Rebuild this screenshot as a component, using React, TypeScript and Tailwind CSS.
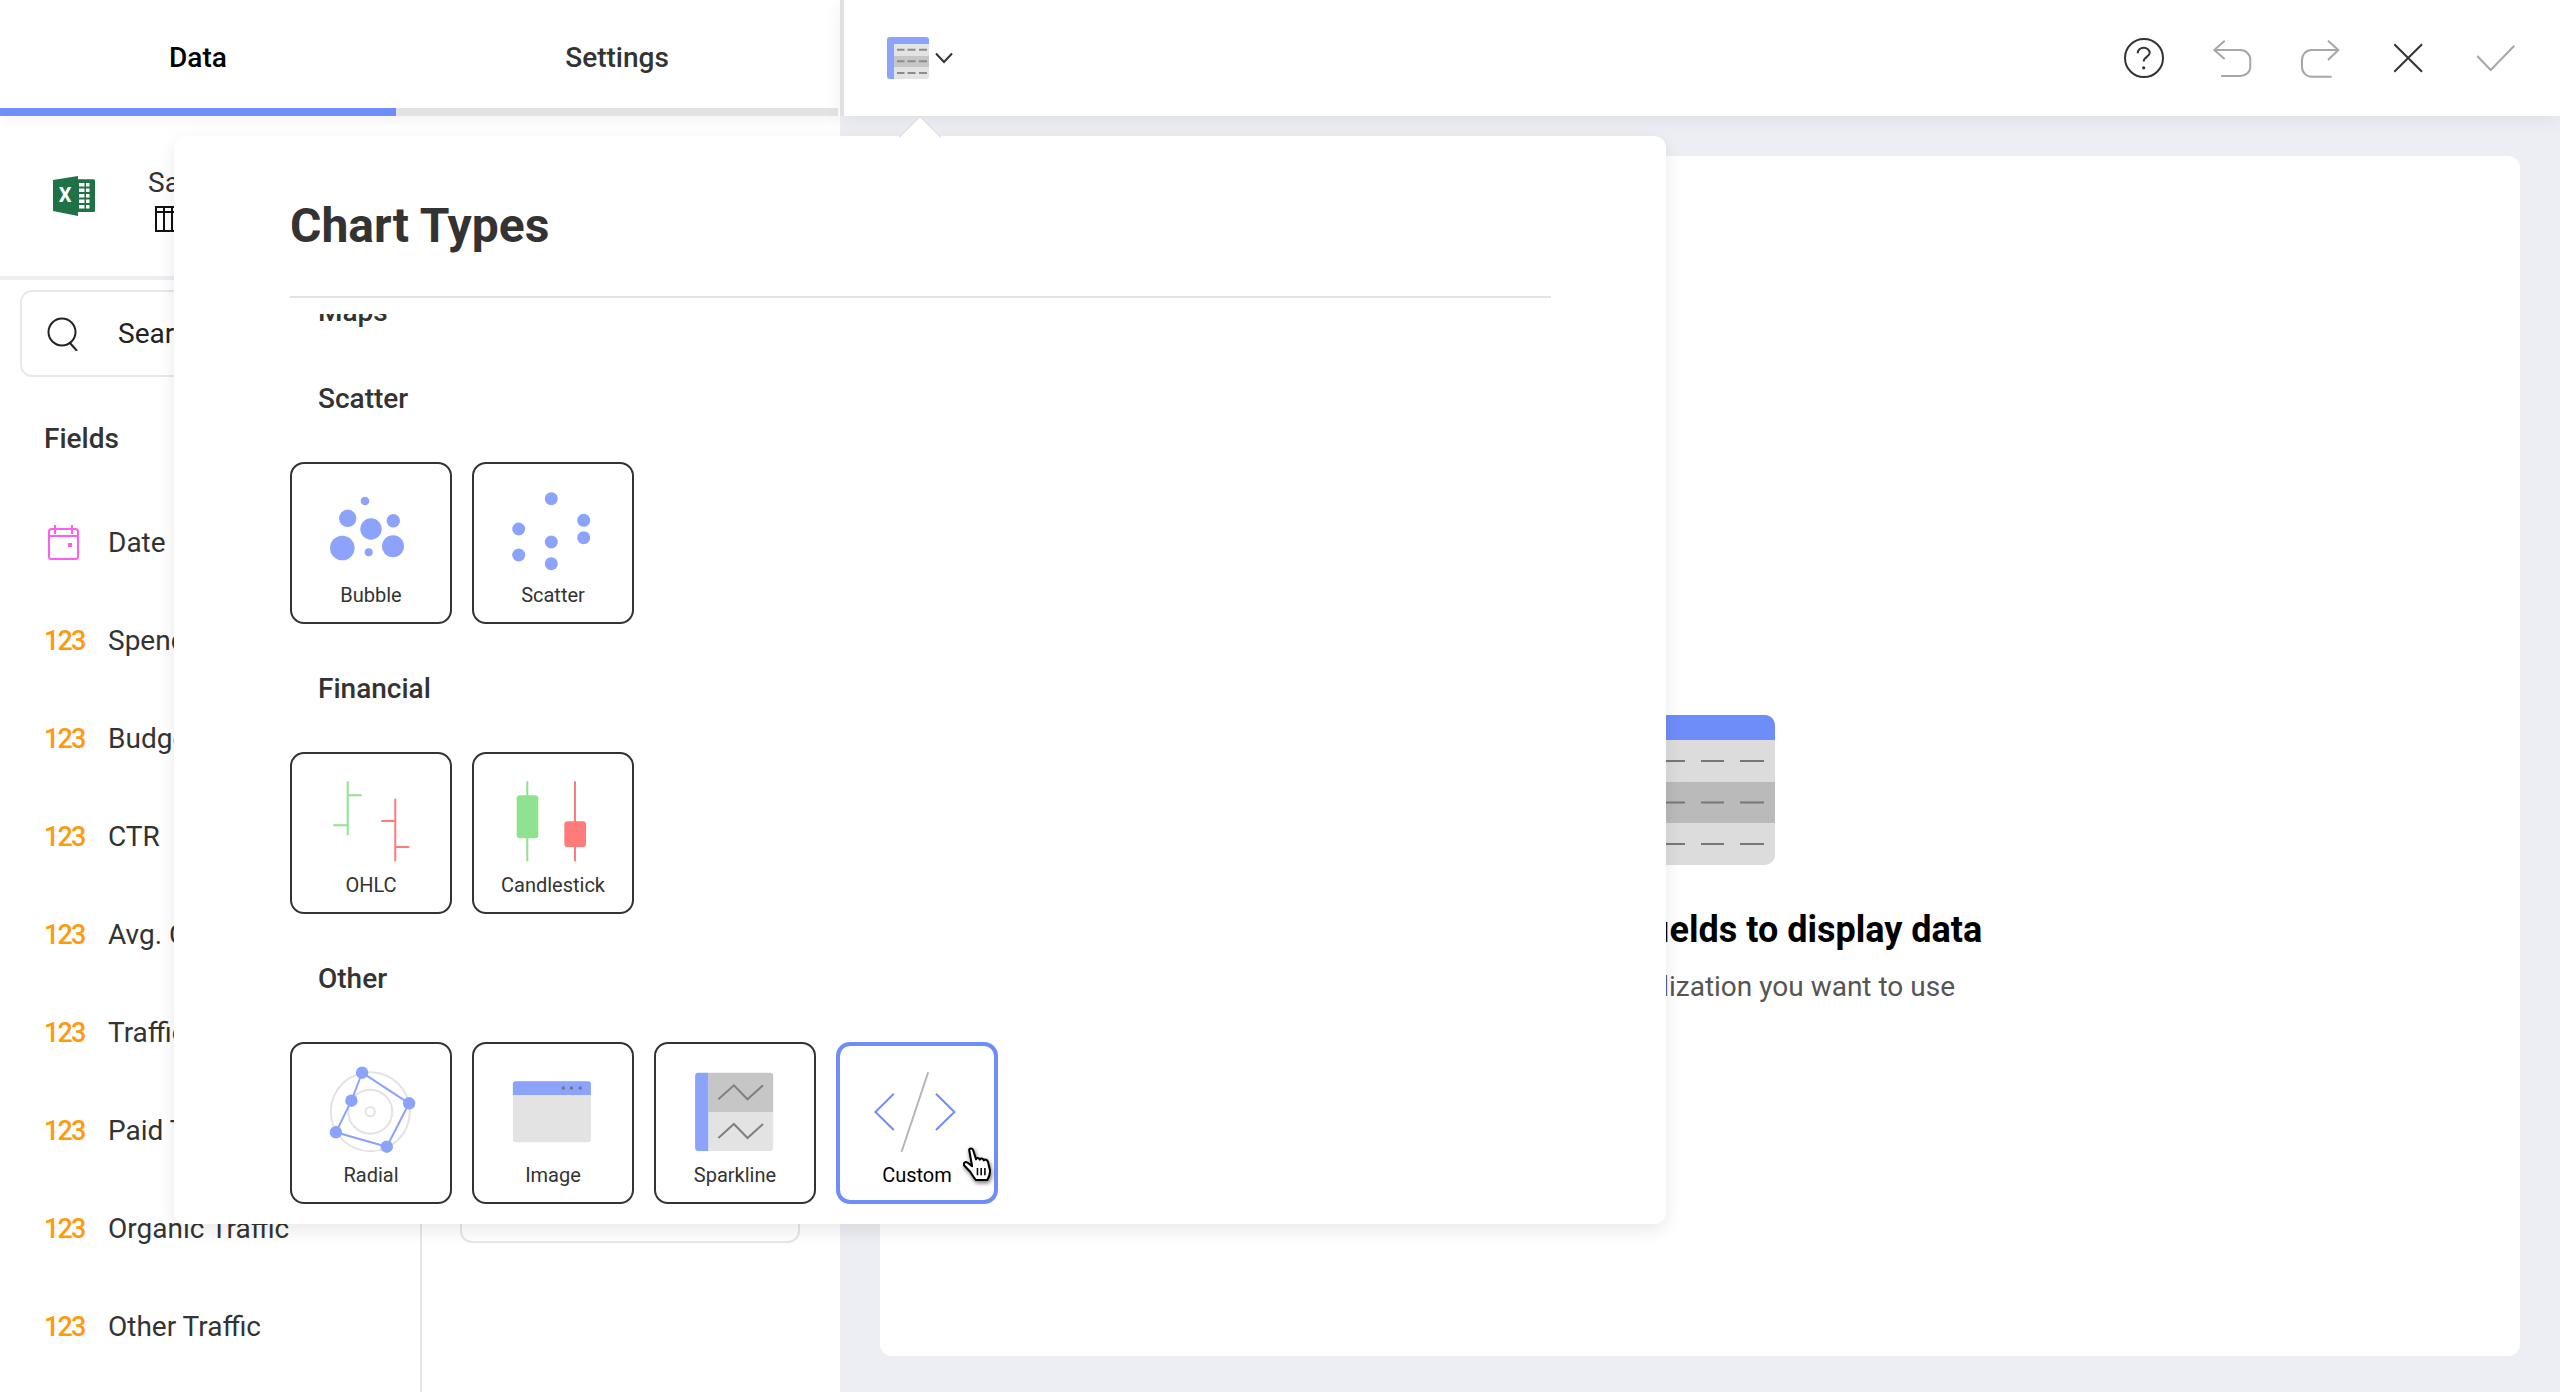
import type { ReactNode } from 'react';

const BLUE = '#8ca3fb';
const GRID = '#e3e3e3';

function BubbleIcon() {
  const dots = [
    [73, 37, 4.3], [55.7, 54.3, 8.7], [79, 65, 10.7], [101.3, 56.7, 6.7],
    [50.3, 84, 12.3], [101, 82.3, 11], [76.7, 88.3, 4],
  ];
  return <>{dots.map(([cx, cy, r]) => <circle key={`${cx}-${cy}`} cx={cx} cy={cy} r={r} fill={BLUE} />)}</>;
}

function ScatterIcon() {
  const dots = [
    [77.3, 34.7], [44.7, 65], [109.7, 56.3], [109.7, 73.7], [77.3, 78], [44.7, 91], [77.3, 99.7],
  ];
  return <>{dots.map(([cx, cy]) => <circle key={`${cx}-${cy}`} cx={cx} cy={cy} r={6.5} fill={BLUE} />)}</>;
}

function OhlcIcon() {
  return (
    <g fill="none" strokeWidth={2}>
      <path d="M55.7 27.3V81.3M55.7 41.3H69.7M41.3 71.3H55.7" stroke="#8fe28f" />
      <path d="M103.3 44.7V107.3M89.3 67H103.3M103.3 93H117.3" stroke="#ff7b7b" />
    </g>
  );
}

function CandlestickIcon() {
  return (
    <>
      <path d="M53.3 27.3V107.3" stroke="#8fe28f" strokeWidth={2} />
      <rect x={42.7} y={41.3} width={21.6} height={43} rx={3} fill="#8fe28f" />
      <path d="M101 27.3V107.3" stroke="#ff7b7b" strokeWidth={2} />
      <rect x={90.3} y={67.3} width={21.7} height={25.7} rx={3} fill="#ff7b7b" />
    </>
  );
}

function RadialIcon() {
  const pts = [[70.1, 28.7], [117.1, 59.3], [94.8, 102.7], [43.9, 88.3], [59.4, 56.7]];
  return (
    <>
      <g fill="none" stroke={GRID} strokeWidth={2}>
        <circle cx={78.3} cy={67.7} r={39.5} />
        <circle cx={78.3} cy={67.7} r={22} />
        <circle cx={78.3} cy={67.7} r={4.6} />
      </g>
      <polygon points={pts.map((p) => p.join(',')).join(' ')} fill="none" stroke={BLUE} strokeWidth={2} />
      {pts.map(([cx, cy]) => <circle key={cx} cx={cx} cy={cy} r={6.2} fill={BLUE} />)}
    </>
  );
}

function ImageIcon() {
  return (
    <>
      <rect x={38.9} y={37.3} width={78} height={61} rx={3} fill={GRID} />
      <path d="M38.9 51V40.3a3 3 0 0 1 3-3h72a3 3 0 0 1 3 3V51z" fill={BLUE} />
      <circle cx={89.3} cy={44} r={1.7} fill="#777" />
      <circle cx={97.5} cy={44} r={1.7} fill="#777" />
      <circle cx={106.2} cy={44} r={1.7} fill="#777" />
    </>
  );
}

function SparklineIcon() {
  return (
    <>
      <path d="M52.2 28.7H114.2a3 3 0 0 1 3 3V68H52.2z" fill="#c6c6c6" />
      <path d="M52.2 68H117.2V104a3 3 0 0 1-3 3H52.2z" fill={GRID} />
      <path d="M52.2 28.7H42.1a3 3 0 0 0-3 3V104a3 3 0 0 0 3 3H52.2z" fill={BLUE} />
      <path d="M62.4 55.3L77.9 41.3L91.5 55.3L107 41.3M62.4 94L77.9 80L91.5 94L107 80" fill="none" stroke="#808080" strokeWidth={2} />
    </>
  );
}

function CustomIcon() {
  return (
    <>
      <path d="M55.8 49.7L37.4 68L55.8 86M98 49.7L116.4 68L98 86" fill="none" stroke="#6f8df8" strokeWidth={2} />
      <path d="M90.2 28.3L63.6 107.7" stroke="#b5b5b5" strokeWidth={2} />
    </>
  );
}

function ChartTile({ label, active, children }: { label: string; active?: boolean; children: ReactNode }) {
  return (
    <div
      className={`w-[162px] h-[162px] rounded-[14px] flex flex-col items-center bg-white ${
        active ? 'border-4 border-[#6f8df8] text-black' : 'border-2 border-[#333333] text-[#333333]'
      }`}
    >
      <svg width={158} height={116} viewBox="0 0 158 116" className={`shrink-0 ${active ? '-mt-[2px] -mx-[2px]' : ''}`}>
        {children}
      </svg>
      <span className="mt-[3px] text-[20px] leading-6">{label}</span>
    </div>
  );
}

function SectionTitle({ children, className }: { children: ReactNode; className?: string }) {
  return <h3 className={`pl-[28px] text-[28px] leading-10 font-medium text-[#333333] ${className ?? ''}`}>{children}</h3>;
}

function ChartTypesPanel() {
  return (
    <div className="absolute left-[174px] top-[136px] w-[1492px] h-[1088px] bg-white rounded-[12px] shadow-[0_6px_18px_rgba(0,0,0,0.09)] flex flex-col pl-[116px] pr-[115px] pt-[62px]">
      <h2 className="text-[48px] leading-[56px] font-bold text-[#333333]">Chart Types</h2>
      <div className="mt-[42px] h-[2px] bg-[#e3e3e3] shrink-0" />
      <div className="mt-[16px] flex-1 overflow-hidden">
        <SectionTitle className="-mt-[22px] mb-[47px]">Maps</SectionTitle>
        <SectionTitle className="mb-[43px]">Scatter</SectionTitle>
        <div className="flex gap-5">
          <ChartTile label="Bubble"><BubbleIcon /></ChartTile>
          <ChartTile label="Scatter"><ScatterIcon /></ChartTile>
        </div>
        <SectionTitle className="mt-[45px] mb-[43px]">Financial</SectionTitle>
        <div className="flex gap-5">
          <ChartTile label="OHLC"><OhlcIcon /></ChartTile>
          <ChartTile label="Candlestick"><CandlestickIcon /></ChartTile>
        </div>
        <SectionTitle className="mt-[45px] mb-[43px]">Other</SectionTitle>
        <div className="flex gap-5">
          <ChartTile label="Radial"><RadialIcon /></ChartTile>
          <ChartTile label="Image"><ImageIcon /></ChartTile>
          <ChartTile label="Sparkline"><SparklineIcon /></ChartTile>
          <ChartTile label="Custom" active><CustomIcon /></ChartTile>
        </div>
      </div>
    </div>
  );
}

function HandCursor() {
  return (
    <svg
      width={31}
      height={36}
      viewBox="0 0 30 34"
      className="absolute left-[963px] top-[1147px] drop-shadow-[1px_2px_2px_rgba(0,0,0,0.55)]"
    >
      <path
        d="M6 2.5C6 .5 9 .5 9.8 2.5L12.6 11.500C13 9.6 15.6 9.8 16.2 11.8C16.8 10.2 19.4 10.4 20 12.6C21 11.2 23.6 11.8 24.2 14L26 21.5C26.8 26 25 29 23.5 31.5L12.5 31.5C10 29 8.5 25.5 6.5 23L1.2 17.5C-.2 15.4 2 13.2 4.2 14.6L8.800 18.2z"
        fill="#fff"
        stroke="#000"
        strokeWidth={2}
        strokeLinejoin="round"
      />
      <path d="M14 20V27M17.6 20V27M21.2 20V27" stroke="#000" strokeWidth={1.5} />
    </svg>
  );
}

function ExcelIcon() {
  return (
    <svg width={42} height={40} viewBox="0 0 42 40">
      <rect x={24} y={3.3} width={18} height={32.7} rx={1.5} fill="#1f7246" />
      <path d="M26 7h5.5v3.5H26zM33 7h3.5v3.5H33zM26 12.5h5.5V16H26zM33 12.5h3.5V16H33zM26 18h5.5v3.5H26zM33 18h3.500v3.5H33zM26 23.5h5.5V27H26zM33 23.5h3.5V27H33zM26 29h5.5v3.5H26zM33 29h3.5v3.5H33z" fill="#fff" />
      <polygon points="0,4 25,0 25,40 0,35" fill="#1f7246" />
      <text x={12} y={26} textAnchor="middle" fill="#fff" fontSize={20} fontWeight={700}>X</text>
    </svg>
  );
}

function Field({ name, date }: { name: string; date?: boolean }) {
  return (
    <div className="h-[98px] flex items-center pl-[44px] shrink-0">
      <div className="w-[64px] shrink-0">
        {date ? (
          <svg width={34} height={36} viewBox="0 0 34 36" className="ml-[2px]" fill="none" stroke="#ff5cf4" strokeWidth={2}>
            <rect x={3} y={4} width={29} height={30} rx={2.5} />
            <path d="M3 11H32M9 0V9M26 0V9" />
            <rect x={22} y={18} width={4} height={4} fill="#ff5cf4" stroke="none" />
          </svg>
        ) : (
          <span className="text-[27px] font-medium tracking-[-1.9px] text-[#ff9a0d]">123</span>
        )}
      </div>
      <span className="text-[28px] leading-9 text-[#333333] whitespace-nowrap">{name}</span>
    </div>
  );
}

function Sidebar() {
  const fields = ['Spend', 'Budget', 'CTR', 'Avg. CPC', 'Traffic', 'Paid Traffic', 'Organic Traffic', 'Other Traffic'];
  return (
    <aside className="w-[840px] h-full shrink-0 bg-white flex flex-col overflow-hidden">
      <div className="relative h-[116px] shrink-0 shadow-[0_4px_14px_rgba(0,0,0,0.05)]">
        <div className="w-[838px] h-full flex flex-col">
          <div className="flex-1 flex text-[28px] font-medium pt-2">
            <div className="w-[396px] flex items-center justify-center text-black">Data</div>
            <div className="flex-1 flex items-center justify-center text-[#333333]">Settings</div>
          </div>
          <div className="h-2 bg-[#e3e3e3]">
            <div className="w-[396px] h-full bg-[#6f8df8]" />
          </div>
        </div>
      </div>
      <div className="h-[160px] shrink-0 flex items-center pl-[53px]">
        <ExcelIcon />
        <div className="ml-[53px] mt-[6px] flex flex-col">
          <span className="text-[28px] leading-8 text-[#333333] whitespace-nowrap">Sample Data</span>
          <svg width={28} height={26} viewBox="0 0 28 26" className="mt-[7px] ml-[6px]" fill="none" stroke="#111" strokeWidth={2}>
            <rect x={2} y={1} width={24} height={24} />
            <path d="M2 6H26M10 1V25M18 1V25" />
          </svg>
        </div>
      </div>
      <div className="h-1 shrink-0 bg-[#edeef3]" />
      <div className="flex-1 flex min-h-0">
        <div className="w-[422px] shrink-0 border-r-2 border-[#e6e6e6] flex flex-col">
          <div className="mt-[10px] ml-[20px] mr-[20px] h-[87px] shrink-0 rounded-[12px] border-2 border-[#e8e8e8] flex items-center pl-[25px]">
            <svg width={32} height={34} viewBox="0 0 32 34" fill="none" stroke="#222" strokeWidth={2}>
              <circle cx={15} cy={15} r={13.5} />
              <path d="M23 26L30 34" />
            </svg>
            <span className="ml-[39px] text-[28px] text-[#222222]">Search</span>
          </div>
          <div className="mt-[44px] pl-[44px] text-[28px] leading-9 font-medium text-[#333333]">Fields</div>
          <div className="mt-[37px] flex flex-col">
            <Field name="Date" date />
            {fields.map((f) => <Field key={f} name={f} />)}
          </div>
        </div>
        <div className="flex-1 pl-[38px]">
          <div className="mt-[10px] w-[340px] h-[953px] rounded-[12px] border-2 border-[#e6e6e6]" />
        </div>
      </div>
    </aside>
  );
}

function ToolbarIcon({ children }: { children: ReactNode }) {
  return (
    <div className="w-[88px] flex items-center justify-center">
      <svg width={48} height={48} viewBox="0 0 48 48" fill="none" strokeWidth={2}>
        {children}
      </svg>
    </div>
  );
}

function Toolbar() {
  return (
    <div className="relative h-[116px] shrink-0 -mx-10 -mt-10 mb-10 bg-white border-l-4 border-[#e0e0e0] flex items-center justify-between pl-[43px] pr-5 shadow-[0_4px_18px_rgba(0,0,0,0.06)]">
      <div className="flex items-center">
        <svg width={42} height={42} viewBox="0 0 42 42">
          <rect width={42} height={42} rx={3} fill={GRID} />
          <rect x={7} y={19} width={35} height={11} fill="#c6c6c6" />
          <path d="M7 7V42H3a3 3 0 0 1-3-3V3a3 3 0 0 1 3-3H39a3 3 0 0 1 3 3V7z" fill={BLUE} />
          <path d="M10 12.7H17.5M20.5 12.7H28.5M32 12.7H40M10 24.3H17.5M20.5 24.3H28.5M32 24.3H40M10 36H17.5M20.5 36H28.5M32 36H40" stroke="#8c8c8c" strokeWidth={2} />
        </svg>
        <svg width={18} height={12} viewBox="0 0 18 12" className="ml-[6px]" fill="none" stroke="#333" strokeWidth={2}>
          <path d="M1 1.500L9 10L17 1.500" />
        </svg>
      </div>
      <div className="flex">
        <ToolbarIcon>
          <circle cx={24} cy={24} r={19} stroke="#333" />
          <path d="M17.7 19.3C17.7 16 20.3 13.7 23.7 13.7C27 13.7 29.7 16 29.7 19C29.7 22.5 23.7 23 23.7 27.5" stroke="#333" />
          <circle cx={23.7} cy={33.8} r={1.6} fill="#333" />
        </ToolbarIcon>
        <ToolbarIcon>
          <path d="M16.7 6.7L6.3 16L16.7 25M6.3 16H32.3C38 16 42.3 20.5 42.3 26V32.7C42.3 38 38 42 32.3 42H13" stroke="#a6a6a6" />
        </ToolbarIcon>
        <ToolbarIcon>
          <path d="M32 6.7L42.3 16L32 26M42.3 16H15.7C10 16 6 20.5 6 26V32.7C6 38.5 10 42.7 15.7 42.7H35.7" stroke="#a6a6a6" />
        </ToolbarIcon>
        <ToolbarIcon>
          <path d="M10.3 10.3L38 37.7M38 10.3L10.3 37.7" stroke="#333" />
        </ToolbarIcon>
        <ToolbarIcon>
          <path d="M5.3 22L18.7 36L42.3 11.7" stroke="#a6a6a6" />
        </ToolbarIcon>
      </div>
    </div>
  );
}

function EmptyCanvas() {
  return (
    <div className="flex-1 bg-white rounded-[12px] flex flex-col items-center pt-[559px]">
      <svg width={150} height={150} viewBox="0 0 150 150">
        <rect width={150} height={150} rx={10} fill="#dcdcdc" />
        <rect y={67} width={150} height={41} fill="#bababa" />
        <path d="M0 25V10A10 10 0 0 1 10 0H140A10 10 0 0 1 150 10V25z" fill="#6f8df8" />
        <path d="M37 46H60M76 46H99M115 46H139M37 87.500H60M76 87.500H99M115 87.500H139M37 129H60M76 129H99M115 129H139" stroke="#777" strokeWidth={2} />
      </svg>
      <h1 className="mt-[43px] pr-[6px] text-[36px] leading-[44px] font-bold text-black whitespace-nowrap">Drag and drop fields to display data</h1>
      <p className="mt-[17px] text-[28px] leading-9 text-[#555555] whitespace-nowrap">Select what visualization you want to use</p>
    </div>
  );
}

export default function App() {
  return (
    <div className="relative w-[2560px] h-[1392px] overflow-hidden flex bg-[#edeef3] font-['Roboto',sans-serif]">
      <Sidebar />
      <main className="flex-1 flex flex-col px-10 pt-10 pb-9">
        <Toolbar />
        <EmptyCanvas />
      </main>
      <ChartTypesPanel />
      {/* notch that ties the panel to the chart type button */}
      <div className="absolute left-[905px] top-[122px] w-[30px] h-[30px] rotate-45 bg-white border-l border-t border-[#d8d8de]" />
      <HandCursor />
    </div>
  );
}
